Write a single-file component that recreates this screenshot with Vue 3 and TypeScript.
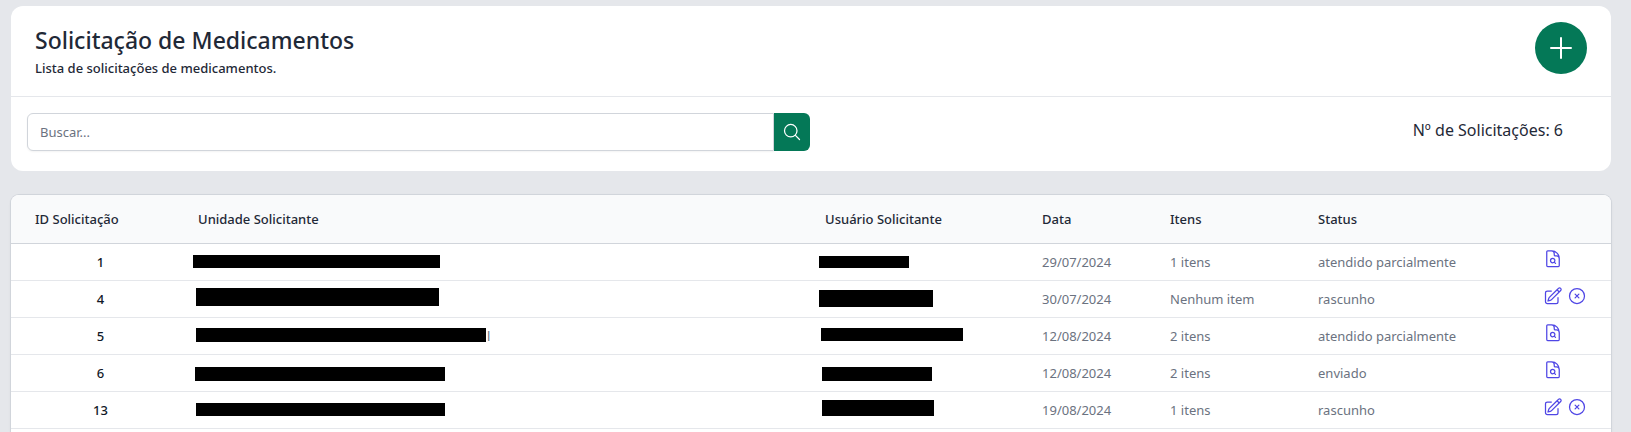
<script setup lang="ts">
import { ref } from 'vue'

interface Bar {
  x: number
  y: number
  width: number
  height: number
}

interface Solicitacao {
  id: number
  unidade: Bar
  sufixo?: string
  usuario: Bar
  data: string
  itens: string
  status: string
}

const busca = ref('')
const total = 6

const bar = (x: number, y: number, width: number, height: number): Bar => ({ x, y, width, height })

const solicitacoes: Solicitacao[] = [
  { id: 1, unidade: bar(7, 11, 247, 13), usuario: bar(6, 12, 90, 12), data: '29/07/2024', itens: '1 itens', status: 'atendido parcialmente' },
  { id: 4, unidade: bar(10, 7, 243, 18), usuario: bar(6, 9, 114, 17), data: '30/07/2024', itens: 'Nenhum item', status: 'rascunho' },
  { id: 5, unidade: bar(10, 10, 290, 14), sufixo: 'l', usuario: bar(8, 10, 142, 13), data: '12/08/2024', itens: '2 itens', status: 'atendido parcialmente' },
  { id: 6, unidade: bar(9, 12, 250, 14), usuario: bar(9, 12, 110, 14), data: '12/08/2024', itens: '2 itens', status: 'enviado' },
  { id: 13, unidade: bar(10, 11, 249, 13), usuario: bar(9, 8, 112, 16), data: '19/08/2024', itens: '1 itens', status: 'rascunho' },
]
</script>

<template>
  <main class="page">
    <section class="card">
      <header class="card-header">
        <div>
          <h1>Solicitação de Medicamentos</h1>
          <p>Lista de solicitações de medicamentos.</p>
        </div>
        <button class="add" type="button" aria-label="Nova solicitação">
          <svg class="icon icon-lg" viewBox="0 0 24 24"><path d="M12 4.5v15m7.5-7.5h-15" /></svg>
        </button>
      </header>
      <div class="toolbar">
        <form class="search" role="search" @submit.prevent>
          <input v-model="busca" type="text" placeholder="Buscar..." aria-label="Buscar" />
          <button type="submit" aria-label="Pesquisar">
            <svg class="icon" viewBox="0 0 24 24">
              <path d="M21 21l-5.197-5.197m0 0A7.5 7.5 0 105.196 5.196a7.5 7.5 0 0010.607 10.607z" />
            </svg>
          </button>
        </form>
        <span class="count">Nº de Solicitações: {{ total }}</span>
      </div>
    </section>

    <section class="list">
      <table>
        <colgroup>
          <col class="c-id" />
          <col class="c-unidade" />
          <col class="c-usuario" />
          <col class="c-data" />
          <col class="c-itens" />
          <col class="c-status" />
          <col />
        </colgroup>
        <thead>
          <tr>
            <th scope="col" class="id-head">ID Solicitação</th>
            <th scope="col">Unidade Solicitante</th>
            <th scope="col">Usuário Solicitante</th>
            <th scope="col">Data</th>
            <th scope="col">Itens</th>
            <th scope="col">Status</th>
            <td></td>
          </tr>
        </thead>
        <tbody>
          <tr v-for="s in solicitacoes" :key="s.id">
            <td class="id">{{ s.id }}</td>
            <td class="hidden-value">
              <svg class="mask">
                <rect v-bind="s.unidade" />
                <text v-if="s.sufixo" :x="s.unidade.x + s.unidade.width + 1" y="23">{{ s.sufixo }}</text>
              </svg>
            </td>
            <td class="hidden-value">
              <svg class="mask"><rect v-bind="s.usuario" /></svg>
            </td>
            <td>{{ s.data }}</td>
            <td>{{ s.itens }}</td>
            <td>{{ s.status }}</td>
            <td>
              <div class="actions">
                <template v-if="s.status === 'rascunho'">
                  <button type="button" aria-label="Editar">
                    <svg class="icon" viewBox="0 0 24 24">
                      <path d="M16.862 4.487l1.687-1.688a1.875 1.875 0 112.652 2.652L10.582 16.07a4.5 4.5 0 01-1.897 1.13L6 18l.8-2.685a4.5 4.5 0 011.13-1.897l8.932-8.931zm0 0L19.5 7.125M18 14v4.75A2.25 2.25 0 0115.75 21H5.25A2.25 2.25 0 013 18.75V8.25A2.25 2.25 0 015.25 6H10" />
                    </svg>
                  </button>
                  <button type="button" aria-label="Cancelar">
                    <svg class="icon" viewBox="0 0 24 24">
                      <path d="M9.75 9.75l4.5 4.5m0-4.5l-4.5 4.5M21 12a9 9 0 11-18 0 9 9 0 0118 0z" />
                    </svg>
                  </button>
                </template>
                <button v-else type="button" aria-label="Visualizar">
                  <svg class="icon" viewBox="0 0 24 24">
                    <path d="M19.5 14.25v-2.625a3.375 3.375 0 00-3.375-3.375h-1.5A1.125 1.125 0 0113.5 7.125v-1.5a3.375 3.375 0 00-3.375-3.375H8.25m5.231 13.481L15 17.25m-4.5-15H5.625c-.621 0-1.125.504-1.125 1.125v16.5c0 .621.504 1.125 1.125 1.125h12.75c.621 0 1.125-.504 1.125-1.125V11.25a9 9 0 00-9-9zm3.75 11.625a2.625 2.625 0 11-5.25 0 2.625 2.625 0 015.25 0z" />
                  </svg>
                </button>
              </div>
            </td>
          </tr>
        </tbody>
      </table>
    </section>
  </main>
</template>

<style>
body {
  background: #e5e7eb;
}
</style>

<style scoped>
.page {
  box-sizing: border-box;
  display: flex;
  flex-direction: column;
  gap: 24px;
  min-height: 100vh;
  padding: 6px 20px 0 11px;
  font-family: "Noto Sans", "Open Sans", sans-serif;
  font-size: 13px;
  line-height: 20px;
  color: #1f2937;
}
.card {
  background: #fff;
  border-radius: 12px;
}
.card-header {
  display: flex;
  justify-content: space-between;
  padding: 16px 24px 18px;
  border-bottom: 1px solid #e5e7eb;
}
h1 {
  margin: 2px 0;
  font-size: 23px;
  line-height: 32px;
  font-weight: 500;
}
p {
  margin: 0;
  font-weight: 500;
}
button {
  display: flex;
  align-items: center;
  justify-content: center;
  padding: 0;
  border: 0;
  background: none;
  color: inherit;
  cursor: pointer;
}
.icon {
  display: block;
  width: 20px;
  height: 20px;
  fill: none;
  stroke: currentColor;
  stroke-width: 1.5;
  stroke-linecap: round;
  stroke-linejoin: round;
}
.icon-lg {
  width: 32px;
  height: 32px;
}
.add {
  width: 52px;
  height: 52px;
  border-radius: 50%;
  background: #047857;
  color: #fff;
}
.toolbar {
  display: flex;
  justify-content: space-between;
  padding: 16px 48px 20px 16px;
}
.search {
  display: flex;
  flex: 0 1 51%;
}
.search input {
  flex: 1;
  min-width: 0;
  box-sizing: border-box;
  height: 38px;
  padding: 0 12px;
  border: 1px solid #d1d5db;
  border-radius: 6px 0 0 6px;
  box-shadow: 0 1px 2px rgb(0 0 0 / 5%);
  font: inherit;
  color: inherit;
}
.search input::placeholder {
  color: #6b7280;
}
.search button {
  width: 36px;
  height: 38px;
  border-radius: 0 6px 6px 0;
  background: #047857;
  color: #fff;
}
.count {
  font-size: 16px;
  line-height: 34px;
}
.list {
  flex: 1;
  overflow: hidden;
  background: #fff;
  border-radius: 8px 8px 0 0;
  box-shadow: 0 0 0 1px #d1d5db, 0 1px 3px rgb(0 0 0 / 10%);
}
table {
  width: 100%;
  table-layout: fixed;
  border-collapse: separate;
  border-spacing: 0;
}
.c-id { width: 10.94%; }
.c-unidade { width: 39.19%; }
.c-usuario { width: 13.56%; }
.c-data { width: 8%; }
.c-itens { width: 9.25%; }
.c-status { width: 14.06%; }
thead th,
thead td {
  padding: 14px 12px;
  border-bottom: 1px solid #d1d5db;
  background: #f9fafb;
  text-align: left;
  font-weight: 500;
}
thead .id-head {
  padding-left: 24px;
}
tbody td {
  height: 36px;
  padding: 0 12px;
  border-bottom: 1px solid #e5e7eb;
  color: #6b7280;
  white-space: nowrap;
}
tbody .id {
  padding: 0 20px 0 24px;
  text-align: center;
  font-weight: 500;
  color: #111827;
}
tbody .hidden-value {
  padding: 0;
}
.mask {
  display: block;
  width: 100%;
  height: 36px;
}
.mask rect {
  fill: #000;
}
.mask text {
  fill: #6b7280;
}
.actions {
  display: flex;
  gap: 4px;
  padding-bottom: 6px;
  color: #4f46e5;
}
</style>
